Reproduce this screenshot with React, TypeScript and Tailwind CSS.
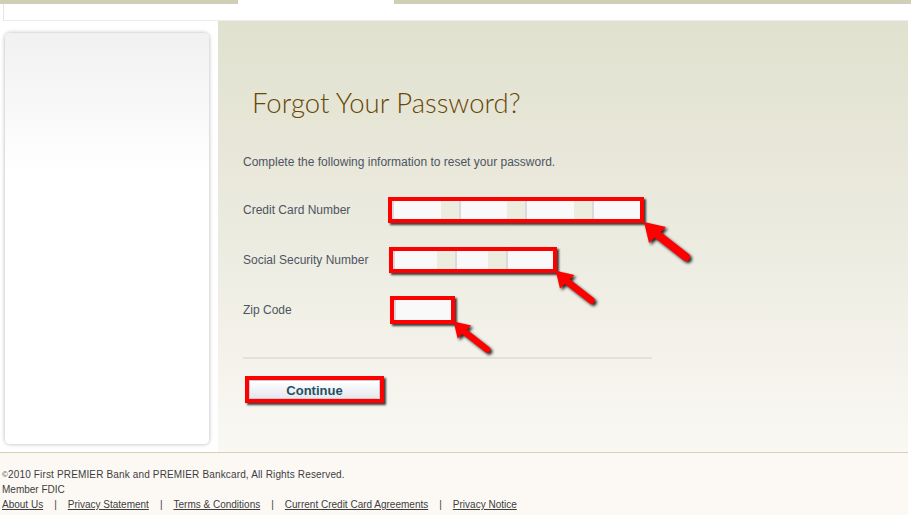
import React from 'react';

// red callout arrow, tip sits at the top-left corner of the svg
function Arrow({ scale = 1 }: { scale?: number }) {
  return (
    <svg
      width={50 * scale}
      height={44 * scale}
      viewBox="0 0 50 44"
      className="drop-shadow-[2px_2px_1.5px_rgba(0,0,0,0.85)]"
    >
      <polygon points="2,2 24,7 7,23" fill="#ff0000" />
      <line x1="12" y1="12" x2="44" y2="37" stroke="#ff0000" strokeWidth="8" strokeLinecap="round" />
    </svg>
  );
}

function Seg({ className = '' }: { className?: string }) {
  return <div className={`h-full bg-[#f9f9f9] border-l-2 border-[#d9d9de] ${className}`} />;
}

function RedBox({ children, className = '' }: { children: React.ReactNode; className?: string }) {
  return (
    <div className={`relative border-4 border-[#ff0000] shadow-[2px_2px_2px_rgba(0,0,0,0.75)] ${className}`}>
      {children}
    </div>
  );
}

const links = ['About Us', 'Privacy Statement', 'Terms & Conditions', 'Current Credit Card Agreements', 'Privacy Notice'];

export default function App() {
  return (
    <div className="w-[911px] h-[515px] overflow-hidden bg-white font-['Liberation_Sans',Arial,sans-serif]">
      {/* top strip */}
      <div className="flex h-[4px]">
        <div className="w-[238px] bg-[#cfcfb6]" />
        <div className="w-[156px] bg-white" />
        <div className="flex-1 bg-[#cfcfb6]" />
      </div>
      <div className="h-[17px] ml-[3px] mr-[3px] border-l border-[#e6e6e6] border-b border-b-[#ececec]" />

      {/* main */}
      <div className="flex h-[431px] pr-[3px]">
        <div className="w-[218px] bg-white pl-[5px] pt-[12px]">
          <div className="w-[204px] h-[411px] rounded-[5px] bg-gradient-to-b from-[#f1f1f1] via-white via-35% to-white shadow-[0_0_4px_rgba(0,0,0,0.3)]" />
        </div>
        <div className="flex-1 bg-gradient-to-b from-[#e1e1cf] via-[#ecebe0] to-[#faf8f3] pl-[25px] pt-[65px]">
          <h1 className="ml-[9px] text-[27.5px] leading-[34px] font-light text-[#684806] font-['Lato',sans-serif]">
            Forgot Your Password?
          </h1>
          <p className="mt-[35px] text-[12px] leading-[14px] text-[#4d5561]">
            Complete the following information to reset your password.
          </p>

          <div className="mt-[16px] text-[12px] text-[#4d5561]">
            <div className="flex items-center h-[50px]">
              <span className="w-[145px]">Credit Card Number</span>
              <RedBox className="w-[256px] h-[26px]">
                <div className="flex gap-[18px] h-full bg-[#ececdf]">
                  <Seg className="flex-1" />
                  <Seg className="flex-1" />
                  <Seg className="flex-1" />
                  <Seg className="flex-1" />
                </div>
                <div className="absolute left-[calc(100%+2px)] top-[calc(100%+1px)]">
                  <Arrow />
                </div>
              </RedBox>
            </div>
            <div className="flex items-center h-[50px]">
              <span className="w-[146px]">Social Security Number</span>
              <RedBox className="w-[168px] h-[26px]">
                <div className="flex gap-[18px] h-full bg-[#ececdf]">
                  <Seg className="w-[44px]" />
                  <Seg className="w-[33px]" />
                  <Seg className="flex-1" />
                </div>
                <div className="absolute left-[calc(100%+1px)] top-[calc(100%)]">
                  <Arrow scale={0.85} />
                </div>
              </RedBox>
            </div>
            <div className="flex items-center h-[50px]">
              <span className="w-[147px]">Zip Code</span>
              <RedBox className="w-[65px] h-[28px]">
                <Seg className="w-full border-l-0 bg-[#f6f6f4]" />
                <div className="absolute left-[calc(100%+1px)] top-[calc(100%)]">
                  <Arrow scale={0.8} />
                </div>
              </RedBox>
            </div>
          </div>

          <div className="mt-[22px] w-[409px] h-[2px] bg-[#e3e2d8]" />

          <RedBox className="mt-[17px] ml-[2px] w-[139px] h-[27px]">
            <div className="flex items-center justify-center w-full h-full pt-[1px] bg-gradient-to-b from-white to-[#e6e7ee] border border-[#c8c8d0] text-[13px] font-bold text-[#1e5264] leading-none">
              Continue
            </div>
          </RedBox>
        </div>
      </div>

      {/* footer */}
      <div className="h-[63px] mr-[3px] bg-[#fcf9f5] border-t border-[#d5d1b8] pt-[14px] pl-[2px] text-[10px] leading-[15px] text-[#3d3d3d]">
        <p className="tracking-[0.15px]">
          <sup className="text-[8px] relative -top-[1px]">©</sup>2010 First PREMIER Bank and PREMIER Bankcard, All Rights Reserved.
        </p>
        <p>Member FDIC</p>
        <p className="flex">
          {links.map((l, i) => (
            <span key={l} className="flex">
              {i > 0 && <span className="mx-[11px]">|</span>}
              <a className="underline">{l}</a>
            </span>
          ))}
        </p>
      </div>
    </div>
  );
}
